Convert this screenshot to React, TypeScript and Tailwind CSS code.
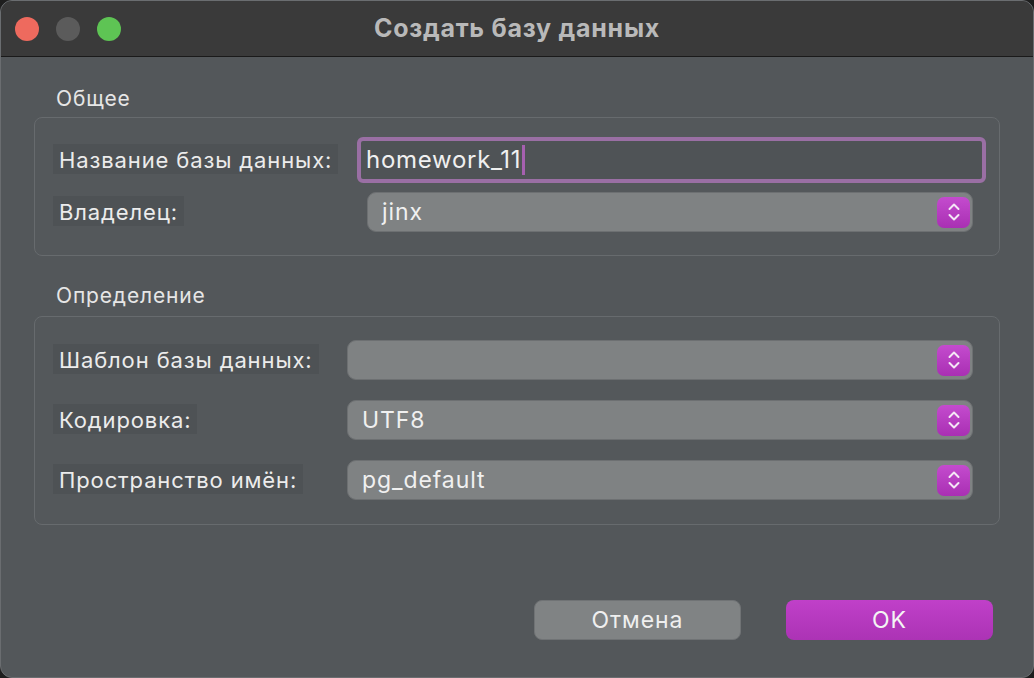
import React from "react";

const font = { fontFamily: "Inter, 'Noto Sans', sans-serif" };

const Stepper = () => (
  <div className="flex h-[31px] w-[33px] items-center justify-center rounded-[7px] bg-gradient-to-b from-[#c44bce] to-[#a92fb3]">
    <svg width="14" height="22" viewBox="0 0 14 22" fill="none">
      <path
        d="M2.5 8 L7 3.5 L11.5 8"
        stroke="#f4e6f6"
        strokeWidth="2"
        strokeLinecap="round"
        strokeLinejoin="round"
      />
      <path
        d="M2.5 14 L7 18.5 L11.5 14"
        stroke="#f4e6f6"
        strokeWidth="2"
        strokeLinecap="round"
        strokeLinejoin="round"
      />
    </svg>
  </div>
);

const Select = ({ value, className }: { value: string; className: string }) => (
  <div
    className={`flex h-[40px] items-center justify-between rounded-[9px] border border-[#6d7072] bg-[#7f8283] pl-[14px] pr-[2px] text-[23px] tracking-[0.04em] text-[#f0f0f0] ${className}`}
  >
    <span>{value}</span>
    <Stepper />
  </div>
);

const Label = ({ text }: { text: string }) => (
  <span className="bg-[#4e5255] px-[6px] pb-[1px] pt-[3px] text-[22px] leading-[26px] tracking-[0.04em] text-[#ececec]">
    {text}
  </span>
);

export default function App() {
  return (
    <div className="h-[678px] w-[1034px] bg-[#1e1e1e]" style={font}>
      <div className="flex h-full w-full flex-col overflow-hidden rounded-[12px] border border-[#6a6d70] bg-[#53575a]">
        {/* title bar */}
        <div className="relative flex h-[56px] shrink-0 items-center border-b border-[#1a1a1a] bg-[#3a3a3a]">
          <div className="flex items-center gap-[17px] pl-[14px]">
            <span className="h-[24px] w-[24px] rounded-full bg-[#ee6a5e]" />
            <span className="h-[24px] w-[24px] rounded-full bg-[#5b5b5b]" />
            <span className="h-[24px] w-[24px] rounded-full bg-[#5ec454]" />
          </div>
          <div className="absolute inset-0 flex items-center justify-center text-[25px] font-bold tracking-[0.03em] text-[#b9b9b9]">
            Создать базу данных
          </div>
        </div>

        <div className="flex flex-1 flex-col px-[33px]">
          <div className="pl-[22px] pt-[29px] text-[21px] leading-[26px] tracking-[0.04em] text-[#e6e6e6]">Общее</div>
          <div className="mt-[5px] flex h-[139px] flex-col gap-[9px] rounded-[8px] border border-[#676b6e] bg-[#54585b] pl-[18px] pt-[19px]">
            <div className="flex items-center">
              <div className="w-[304px]">
                <Label text="Название базы данных:" />
              </div>
              <div className="flex h-[46px] w-[629px] items-center rounded-[6px] border-[4px] border-[#9a6fa4] bg-[#4f5356] pl-[5px] text-[24px] tracking-[0.03em] text-[#f0f0f0]">
                homework_11
                <span className="ml-[1px] h-[30px] w-[3px] bg-[#a660b0]" />
              </div>
            </div>
            <div className="flex items-center">
              <div className="w-[314px]">
                <Label text="Владелец:" />
              </div>
              <Select value="jinx" className="w-[606px]" />
            </div>
          </div>

          <div className="pl-[22px] pt-[27px] text-[21px] leading-[26px] tracking-[0.04em] text-[#e6e6e6]">Определение</div>
          <div className="mt-[7px] flex h-[209px] flex-col gap-[20px] rounded-[8px] border border-[#676b6e] bg-[#54585b] pl-[18px] pt-[23px]">
            <div className="flex items-center">
              <div className="w-[294px]">
                <Label text="Шаблон базы данных:" />
              </div>
              <Select value="" className="w-[626px]" />
            </div>
            <div className="flex items-center">
              <div className="w-[294px]">
                <Label text="Кодировка:" />
              </div>
              <Select value="UTF8" className="w-[626px]" />
            </div>
            <div className="flex items-center">
              <div className="w-[294px]">
                <Label text="Пространство имён:" />
              </div>
              <Select value="pg_default" className="w-[626px]" />
            </div>
          </div>

          <div className="mt-[75px] flex justify-end gap-[45px] pr-[7px]">
            <button className="h-[40px] w-[207px] rounded-[8px] border border-[#707375] bg-[#808384] text-[23px] tracking-[0.04em] text-[#efefef]">
              Отмена
            </button>
            <button className="h-[40px] w-[207px] rounded-[8px] bg-gradient-to-b from-[#c040c9] to-[#ac33b5] text-[23px] tracking-[0.04em] text-[#f4f4f4]">
              OK
            </button>
          </div>
        </div>
      </div>
    </div>
  );
}
